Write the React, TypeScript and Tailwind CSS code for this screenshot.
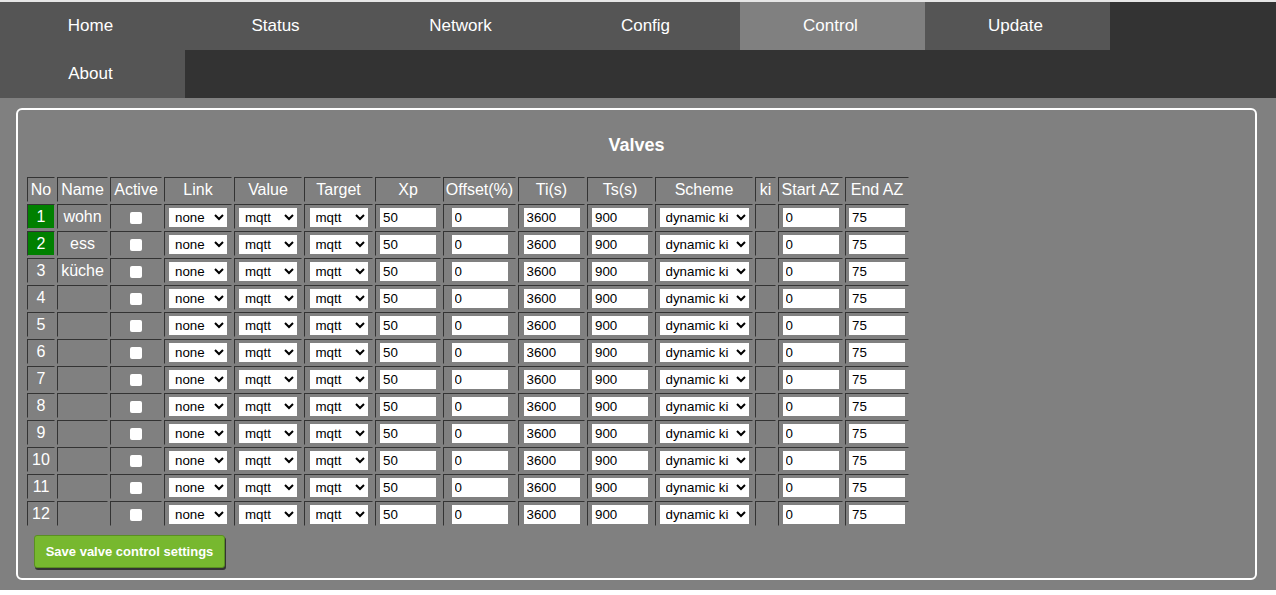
import type { ReactNode } from "react"

const tabs = ["Home", "Status", "Network", "Config", "Control", "Update", "About"]

const columns = [
  { label: "No", w: "w-[28px]" },
  { label: "Name", w: "w-[51px]" },
  { label: "Active", w: "w-[52px]" },
  { label: "Link", w: "w-[68px]" },
  { label: "Value", w: "w-[68px]" },
  { label: "Target", w: "w-[69px]" },
  { label: "Xp", w: "w-[66px]" },
  { label: "Offset(%)", w: "w-[73px]" },
  { label: "Ti(s)", w: "w-[67px]" },
  { label: "Ts(s)", w: "w-[66px]" },
  { label: "Scheme", w: "w-[98px]" },
  { label: "ki", w: "w-[21px]" },
  { label: "Start AZ", w: "w-[65px]" },
  { label: "End AZ", w: "w-[64px]" },
]

const names = ["wohn", "ess", "küche"]

function Cell({ children, className = "" }: { children?: ReactNode; className?: string }) {
  return (
    <td
      className={`h-[25px] border border-t-[#333] border-l-[#333] border-r-[#808080] border-b-[#808080] p-0 text-center align-middle leading-[21px] ${className}`}
    >
      {children}
    </td>
  )
}

function Select({ value, width }: { value: string; width: string }) {
  return (
    <select
      defaultValue={value}
      className={`${width} h-[19px] bg-white text-black text-[13.33px] pl-[2px] align-middle`}
    >
      <option>{value}</option>
    </select>
  )
}

function TextInput({ value, width }: { value: string; width: string }) {
  return (
    <input
      defaultValue={value}
      className={`${width} h-[19px] bg-white text-black text-[13.33px] px-[3px] align-middle`}
    />
  )
}

export default function App() {
  return (
    <div className="min-h-[595px] bg-white font-['Liberation_Sans',Arial,sans-serif]">
      <div className="h-[2px] bg-[#e6e6e6]" />
      <nav className="flex flex-wrap bg-[#333] h-[96px]">
        {tabs.map((t) => (
          <div
            key={t}
            className={`w-[185px] h-[48px] flex items-center justify-center pr-[4px] text-[17px] text-white ${
              t === "Control" ? "bg-[#808080]" : "bg-[#555]"
            }`}
          >
            {t}
          </div>
        ))}
      </nav>
      <main className="bg-[#808080] pl-[16px] pr-[19px] py-[10px]">
        <section className="border-2 border-white rounded-[6px] pb-[10px]">
          <h2 className="text-center text-white font-bold text-[18px] leading-[27px] pt-[22px] pb-[16px]">
            Valves
          </h2>
          <table className="ml-[7px] border-separate border-spacing-[2px] text-white table-fixed">
            <thead>
              <tr>
                {columns.map((c) => (
                  <Cell key={c.label} className={`${c.w} text-[16px] whitespace-nowrap`}>
                    {c.label}
                  </Cell>
                ))}
              </tr>
            </thead>
            <tbody>
              {Array.from({ length: 12 }, (_, i) => (
                <tr key={i}>
                  <Cell className={`text-[16px] ${i < 2 ? "bg-[#008000]" : ""}`}>{i + 1}</Cell>
                  <Cell className="text-[16px]">{names[i] ?? ""}</Cell>
                  <Cell>
                    <input
                      type="checkbox"
                      className="appearance-none w-[12px] h-[12px] bg-white rounded-[2px] align-middle"
                    />
                  </Cell>
                  <Cell>
                    <Select value="none" width="w-[58px]" />
                  </Cell>
                  <Cell>
                    <Select value="mqtt" width="w-[58px]" />
                  </Cell>
                  <Cell>
                    <Select value="mqtt" width="w-[58px]" />
                  </Cell>
                  <Cell>
                    <TextInput value="50" width="w-[56px]" />
                  </Cell>
                  <Cell>
                    <TextInput value="0" width="w-[56px]" />
                  </Cell>
                  <Cell>
                    <TextInput value="3600" width="w-[56px]" />
                  </Cell>
                  <Cell>
                    <TextInput value="900" width="w-[56px]" />
                  </Cell>
                  <Cell>
                    <Select value="dynamic ki" width="w-[89px]" />
                  </Cell>
                  <Cell />
                  <Cell>
                    <TextInput value="0" width="w-[56px]" />
                  </Cell>
                  <Cell>
                    <TextInput value="75" width="w-[56px]" />
                  </Cell>
                </tr>
              ))}
            </tbody>
          </table>
          <button
            type="button"
            className="block ml-[16px] mt-[7px] w-[191px] h-[33px] rounded-[3px] bg-[#77b82f] border border-[#5a8f22] shadow-[1px_2px_0_#333] text-white font-bold text-[13px]"
          >
            Save valve control settings
          </button>
        </section>
      </main>
    </div>
  )
}
